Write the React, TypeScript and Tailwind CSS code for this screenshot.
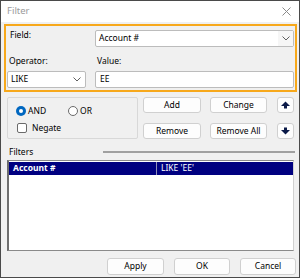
import React from "react";

const Chevron = () => (
  <svg width="8" height="5" viewBox="0 0 8 5" fill="none">
    <path d="M0.5 0.5 L4 4 L7.5 0.5" stroke="#606060" strokeWidth="1" />
  </svg>
);

const Btn = ({ children, w }: { children: React.ReactNode; w: string }) => (
  <div
    className={`${w} h-full bg-[#fdfdfd] border border-[#d0d0d0] rounded-[3px] flex items-center justify-center text-black`}
  >
    {children}
  </div>
);

const ArrowIcon = ({ down }: { down?: boolean }) => (
  <svg width="9" height="8" viewBox="0 0 9 8" style={{ transform: down ? "rotate(180deg)" : undefined }}>
    <polygon points="0,5 4.5,0.5 9,5" fill="#0b1a48" />
    <rect x="3" y="5" width="3" height="2.5" fill="#0b1a48" />
  </svg>
);

export default function App() {
  return (
    <div
      className="w-[300px] h-[278px] border border-[#4a4a4a] bg-[#f0f0f0] flex flex-col overflow-hidden text-[8.5px] text-black"
      style={{ fontFamily: '"Noto Sans", "Open Sans", sans-serif' }}
    >
      {/* Title bar */}
      <div className="h-[21px] bg-white flex items-center justify-between pl-[6px] pr-[8px]">
        <span className="text-[#9a9a9a] text-[9.5px]">Filter</span>
        <svg width="9" height="9" viewBox="0 0 9 9">
          <path d="M0.5 0.5 L8.5 8.5 M8.5 0.5 L0.5 8.5" stroke="#8a8a8a" strokeWidth="1" />
        </svg>
      </div>

      {/* Orange highlight box */}
      <div className="mt-[2px] ml-[3px] w-[293px] h-[68px] border-2 border-[#f7a81b] flex flex-col pt-[4px]">
        <div className="flex h-[17px]">
          <div className="w-[89px] pl-[4px] leading-[10px]">Field:</div>
          <div className="w-[199px] h-[17px] bg-white border border-[#bcbcbc] rounded-[2px] flex items-center">
            <span className="pl-[3px] flex-1">Account #</span>
            <div className="w-[15px] h-full flex items-center justify-center bg-[#f6f6f6]">
              <Chevron />
            </div>
          </div>
        </div>
        <div className="flex h-[12px] mt-[8px] items-center">
          <div className="w-[91px] pl-[3px]">Operator:</div>
          <div>Value:</div>
        </div>
        <div className="flex mt-[4px] h-[17px]">
          <div className="ml-[1px] w-[79px] h-[17px] bg-white border border-[#bcbcbc] rounded-[2px] flex items-center">
            <span className="pl-[3px] flex-1">LIKE</span>
            <div className="w-[13px] mr-[2px] h-full flex items-center justify-center">
              <Chevron />
            </div>
          </div>
          <div className="ml-[9px] w-[199px] h-[17px] bg-white border border-[#bcbcbc] rounded-[2px] flex items-center">
            <span className="pl-[4px]">EE</span>
          </div>
        </div>
      </div>

      {/* Logic + buttons */}
      <div className="mt-[5px] ml-[6px] flex h-[42px]">
        <div className="w-[131px] h-[42px] border border-[#d8d8d8] rounded-[2px] flex flex-col pl-[8px] pt-[7px]">
          <div className="flex items-center h-[12px]">
            <div className="w-[52px] flex items-center">
              <div className="w-[10px] h-[10px] rounded-full bg-[#0067c0] flex items-center justify-center">
                <div className="w-[4px] h-[4px] rounded-full bg-white" />
              </div>
              <span className="ml-[2px]">AND</span>
            </div>
            <div className="flex items-center">
              <div className="w-[10px] h-[10px] rounded-full border border-[#6a6a6a] bg-white" />
              <span className="ml-[2px]">OR</span>
            </div>
          </div>
          <div className="flex items-center h-[12px] mt-[5px] ml-[1px]">
            <div className="w-[10px] h-[10px] rounded-[2px] border border-[#6a6a6a] bg-white" />
            <span className="ml-[5px]">Negate</span>
          </div>
        </div>
        <div className="ml-[5px] flex flex-col gap-[10px]">
          <div className="flex h-[16px]">
            <Btn w="w-[58px]">Add</Btn>
            <div className="ml-[9px] h-full">
              <Btn w="w-[57px]">Change</Btn>
            </div>
            <div className="ml-[10px] h-full">
              <Btn w="w-[17px]">
                <ArrowIcon />
              </Btn>
            </div>
          </div>
          <div className="flex h-[16px]">
            <Btn w="w-[58px]">Remove</Btn>
            <div className="ml-[9px] h-full">
              <Btn w="w-[57px]">Remove All</Btn>
            </div>
            <div className="ml-[10px] h-full">
              <Btn w="w-[17px]">
                <ArrowIcon down />
              </Btn>
            </div>
          </div>
        </div>
      </div>

      {/* Filters label + separator */}
      <div className="mt-[7px] h-[12px] flex items-center">
        <span className="ml-[8px]">Filters</span>
        <div className="ml-auto mr-[4px] w-[192px] h-[2px] bg-[#a0a0a0]" />
      </div>

      {/* List */}
      <div className="mt-[2px] ml-[6px] w-[287px] h-[91px] bg-white border-l-2 border-t border-b border-r border-l-[#6e6e6e] border-t-[#8a8a8a] border-b-[#8a8a8a] border-r-[#d0d0d0] pt-[1px]">
        <div className="h-[13px] bg-[#000080] flex text-white">
          <div className="w-[148px] pl-[4px] font-bold flex items-center border-r border-[#9090b8]">
            Account #
          </div>
          <div className="pl-[4px] flex items-center">LIKE 'EE'</div>
        </div>
      </div>

      {/* Bottom buttons */}
      <div className="mt-[7px] h-[17px] flex justify-end mr-[3px]">
        <Btn w="w-[57px]">Apply</Btn>
        <div className="ml-[10px] h-full">
          <Btn w="w-[56px]">OK</Btn>
        </div>
        <div className="ml-[10px] h-full">
          <Btn w="w-[56px]">Cancel</Btn>
        </div>
      </div>
    </div>
  );
}
